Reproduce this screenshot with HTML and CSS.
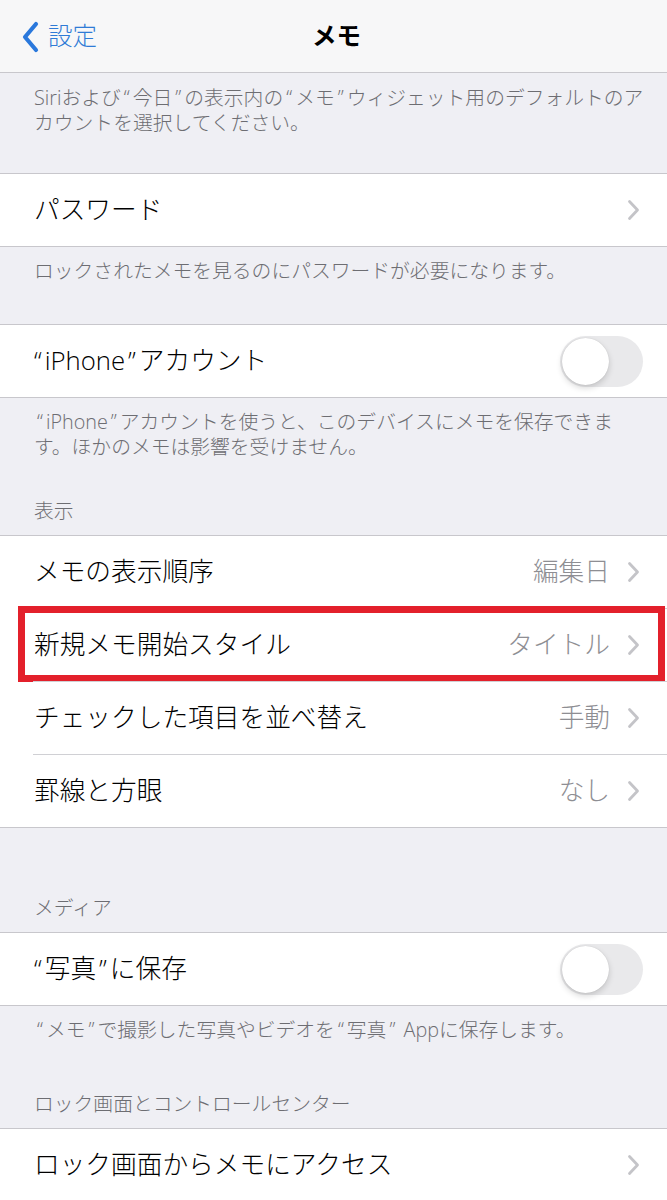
FILE: index.html
```html
<!DOCTYPE html>
<html lang="ja">
<head>
<meta charset="utf-8">
<title>メモ</title>
<link rel="stylesheet" href="styles.css">
</head>
<body>
<div class="page">
  <header class="nav">
    <div class="back">
      <svg class="back-chev" width="18" height="32" viewBox="0 0 18 32"><path d="M15 3 L4 16 L15 29" fill="none" stroke="#2a78dc" stroke-width="4.2" stroke-linecap="round" stroke-linejoin="round"/></svg>
      <span class="back-text">設定</span>
    </div>
    <div class="nav-title">メモ</div>
  </header>

  <div class="note note-first">Siriおよび<span class="q">“</span>今日<span class="q">”</span>の表示内の<span class="q">“</span>メモ<span class="q">”</span>ウィジェット用のデフォルトのア<br>カウントを選択してください。</div>

  <div class="group">
    <div class="row"><span class="label">パスワード</span><span class="right"><svg class="chev" width="13" height="22" viewBox="0 0 13 22"><path d="M2.5 2.5 L10.5 11 L2.5 19.5" fill="none" stroke="#c4c4c8" stroke-width="2.8" stroke-linecap="round" stroke-linejoin="round"/></svg></span></div>
  </div>
  <div class="note note-single">ロックされたメモを見るのにパスワードが必要になります。</div>

  <div class="group">
    <div class="row"><span class="label"><span class="q">“</span>iPhone<span class="q">”</span>アカウント</span><span class="toggle"><span class="knob"></span></span></div>
  </div>
  <div class="note note-double"><span class="q">“</span>iPhone<span class="q">”</span>アカウントを使うと、このデバイスにメモを保存できま<br>す。ほかのメモは影響を受けません。</div>
  <div class="head">表示</div>

  <div class="group">
    <div class="row"><span class="label">メモの表示順序</span><span class="right"><span class="value">編集日</span><svg class="chev" width="13" height="22" viewBox="0 0 13 22"><path d="M2.5 2.5 L10.5 11 L2.5 19.5" fill="none" stroke="#c4c4c8" stroke-width="2.8" stroke-linecap="round" stroke-linejoin="round"/></svg></span></div>
    <div class="row sep highlighted"><span class="label">新規メモ開始スタイル</span><span class="right"><span class="value">タイトル</span><svg class="chev" width="13" height="22" viewBox="0 0 13 22"><path d="M2.5 2.5 L10.5 11 L2.5 19.5" fill="none" stroke="#c4c4c8" stroke-width="2.8" stroke-linecap="round" stroke-linejoin="round"/></svg></span><span class="redbox"></span></div>
    <div class="row sep"><span class="label">チェックした項目を並べ替え</span><span class="right"><span class="value">手動</span><svg class="chev" width="13" height="22" viewBox="0 0 13 22"><path d="M2.5 2.5 L10.5 11 L2.5 19.5" fill="none" stroke="#c4c4c8" stroke-width="2.8" stroke-linecap="round" stroke-linejoin="round"/></svg></span></div>
    <div class="row sep"><span class="label">罫線と方眼</span><span class="right"><span class="value">なし</span><svg class="chev" width="13" height="22" viewBox="0 0 13 22"><path d="M2.5 2.5 L10.5 11 L2.5 19.5" fill="none" stroke="#c4c4c8" stroke-width="2.8" stroke-linecap="round" stroke-linejoin="round"/></svg></span></div>
  </div>

  <div class="spacer"></div>
  <div class="head">メディア</div>
  <div class="group">
    <div class="row"><span class="label"><span class="q">“</span>写真<span class="q">”</span>に保存</span><span class="toggle"><span class="knob"></span></span></div>
  </div>
  <div class="note note-media"><span class="q">“</span>メモ<span class="q">”</span>で撮影した写真やビデオを<span class="q">“</span>写真<span class="q">”</span> Appに保存します。</div>
  <div class="head">ロック画面とコントロールセンター</div>
  <div class="group">
    <div class="row"><span class="label">ロック画面からメモにアクセス</span><span class="right"><svg class="chev" width="13" height="22" viewBox="0 0 13 22"><path d="M2.5 2.5 L10.5 11 L2.5 19.5" fill="none" stroke="#c4c4c8" stroke-width="2.8" stroke-linecap="round" stroke-linejoin="round"/></svg></span></div>
  </div>
</div>
</body>
</html>
```

FILE: styles.css
```css
* { box-sizing: border-box; }
html, body { margin: 0; padding: 0; }
body {
  background: #efeff4;
  font-family: "Open Sans", "Noto Sans CJK JP", sans-serif;
  color: #000;
}
.page { width: 667px; overflow: hidden; }

.nav {
  height: 73px;
  background: #f7f7f8;
  border-bottom: 1px solid #c8c7cc;
  display: flex;
  align-items: center;
  justify-content: center;
  position: relative;
}
.back {
  position: absolute;
  left: 21px;
  top: 0;
  height: 72px;
  display: flex;
  align-items: center;
  gap: 9px;
}
.back-chev { display: block; margin-top: 1px; }
.back-text {
  font-size: 24.5px;
  line-height: 30px;
  font-weight: 300;
  color: #2f7bd6;
}
.nav-title {
  font-size: 24.5px;
  font-weight: 700;
  line-height: 30px;
  margin-top: -1px;
  margin-left: 6px;
}

.q { padding: 0 3px; }

.note {
  font-size: 19.8px;
  line-height: 25px;
  font-weight: 300;
  color: #6d6d72;
  padding: 11px 10px 0 34px;
  white-space: nowrap;
}
.note-first { height: 100px; padding-top: 12px; }
.note-single { height: 77px; }
.note-double { height: 100px; }
.note-media { height: 85px; }

.head {
  font-size: 19.8px;
  line-height: 25px;
  font-weight: 300;
  color: #6d6d72;
  padding: 0 16px 12px 34px;
  height: 37px;
}
.spacer { height: 67px; }

.group {
  background: #fff;
  border-top: 1px solid #c8c7cc;
  border-bottom: 1px solid #c8c7cc;
}
.row {
  height: 72px;
  display: flex;
  align-items: center;
  justify-content: space-between;
  padding: 0 27px 0 34px;
  position: relative;
}
.row.sep { height: 73px; }
.row.sep::before {
  content: "";
  position: absolute;
  left: 33px;
  right: 0;
  top: 0;
  height: 1px;
  background: #d0d0d4;
}
.label {
  font-size: 25.7px;
  line-height: 32px;
  font-weight: 300;
  white-space: nowrap;
}
.label .q:first-child { padding-left: 0; }
.right {
  display: flex;
  align-items: center;
  gap: 17px;
}
.value {
  font-size: 25.7px;
  line-height: 32px;
  font-weight: 300;
  color: #8e8e93;
}
.chev { display: block; }

.toggle {
  width: 83px;
  height: 51px;
  border-radius: 26px;
  background: #e9e9eb;
  position: relative;
  margin-right: -3px;
}
.knob {
  position: absolute;
  left: 2px;
  top: 2px;
  width: 47px;
  height: 47px;
  border-radius: 50%;
  background: #fff;
  box-shadow: 0 3px 6px rgba(0,0,0,0.16), 0 0 1px rgba(0,0,0,0.18);
}

.redbox {
  position: absolute;
  left: 18px;
  right: 2px;
  top: -2px;
  bottom: -1px;
  border: 7px solid #e3202b;
  pointer-events: none;
}
```
